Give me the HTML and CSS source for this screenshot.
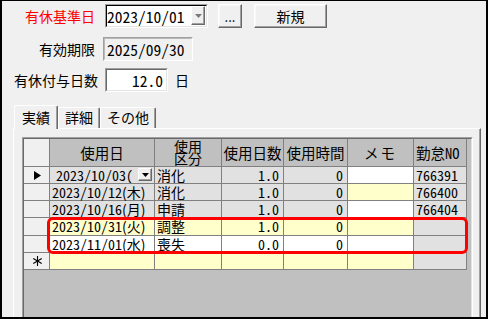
FILE: index.html
```html
<!DOCTYPE html>
<html lang="ja">
<head>
<meta charset="utf-8">
<title>有休</title>
<link rel="stylesheet" href="styles.css">
</head>
<body>
<div class="window">
  <div class="form">
    <div class="row r1">
      <span class="lbl red">有休基準日</span>
      <div class="combo sunken">
        <div class="sunken-in combo-in">
          <span class="val num">2023/10/01</span>
          <span class="ddbtn"><svg width="7" height="4" viewBox="0 0 7 4"><polygon points="0,0 7,0 3.5,4" fill="#7a7a7a"/></svg></span>
        </div>
      </div>
      <button class="btn dots">...</button>
      <button class="btn newbtn">新規</button>
    </div>
    <div class="row r2">
      <span class="lbl">有効期限</span>
      <div class="tb2 sunken">
        <div class="sunken-in tb2-in"><span class="val num">2025/09/30</span></div>
      </div>
    </div>
    <div class="row r3">
      <span class="lbl">有休付与日数</span>
      <div class="tb3 sunken">
        <div class="sunken-in tb3-in"><span class="val num">12.0</span></div>
      </div>
      <span class="unit">日</span>
    </div>
  </div>

  <div class="tabstrip">
    <div class="tab sel">実績</div>
    <div class="tab t2">詳細</div>
    <div class="tab t3">その他</div>
  </div>

  <div class="panel">
    <div class="grid">
      <div class="grid-in">
        <div class="gr hd">
          <div class="c w0 rh"></div>
          <div class="c w1 h">使用日</div>
          <div class="c w2 h two">使用<br>区分</div>
          <div class="c w3 h">使用日数</div>
          <div class="c w4 h">使用時間</div>
          <div class="c w5 h memo">メモ</div>
          <div class="c w6 h hl">勤怠<span class="num">NO</span></div>
        </div>

        <div class="gr">
          <div class="c w0 rh mark"><svg width="7" height="9" viewBox="0 0 7 9"><polygon points="0,0 7,4.5 0,9" fill="#000"/></svg></div>
          <div class="c w1 g edit"><span class="num">2023/10/03(</span><span class="cellbtn"><svg width="7" height="4" viewBox="0 0 7 4"><polygon points="0,0 7,0 3.5,4" fill="#000"/></svg></span></div>
          <div class="c w2 g l">消化</div>
          <div class="c w3 g r num">1.0</div>
          <div class="c w4 g r num">0</div>
          <div class="c w5 w"></div>
          <div class="c w6 g l num">766391</div>
        </div>

        <div class="gr">
          <div class="c w0 rh"></div>
          <div class="c w1 g l"><span class="num">2023/10/12</span>(木)</div>
          <div class="c w2 g l">消化</div>
          <div class="c w3 g r num">1.0</div>
          <div class="c w4 g r num">0</div>
          <div class="c w5 y"></div>
          <div class="c w6 g l num">766400</div>
        </div>

        <div class="gr">
          <div class="c w0 rh"></div>
          <div class="c w1 g l"><span class="num">2023/10/16</span>(月)</div>
          <div class="c w2 g l">申請</div>
          <div class="c w3 g r num">1.0</div>
          <div class="c w4 g r num">0</div>
          <div class="c w5 w"></div>
          <div class="c w6 g l num">766404</div>
        </div>

        <div class="gr tall">
          <div class="c w0 rh"></div>
          <div class="c w1 y l"><span class="num">2023/10/31</span>(火)</div>
          <div class="c w2 y l">調整</div>
          <div class="c w3 y r num">1.0</div>
          <div class="c w4 y r num">0</div>
          <div class="c w5 y"></div>
          <div class="c w6 g"></div>
        </div>

        <div class="gr">
          <div class="c w0 rh"></div>
          <div class="c w1 w l"><span class="num">2023/11/01</span>(水)</div>
          <div class="c w2 w l">喪失</div>
          <div class="c w3 w r num">0.0</div>
          <div class="c w4 w r num">0</div>
          <div class="c w5 w"></div>
          <div class="c w6 g"></div>
        </div>

        <div class="gr">
          <div class="c w0 rh mark"><svg width="9" height="10" viewBox="0 0 9 10"><g stroke="#000" stroke-width="1.1"><line x1="4.5" y1="0" x2="4.5" y2="10"/><line x1="0.3" y1="2.5" x2="8.7" y2="7.5"/><line x1="0.3" y1="7.5" x2="8.7" y2="2.5"/></g></svg></div>
          <div class="c w1 y"></div>
          <div class="c w2 y"></div>
          <div class="c w3 y"></div>
          <div class="c w4 y"></div>
          <div class="c w5 y"></div>
          <div class="c w6 g"></div>
        </div>

        <div class="highlight"></div>
      </div>
    </div>
  </div>
</div>
</body>
</html>
```

FILE: styles.css
```css
* { box-sizing: border-box; }
html, body { margin: 0; padding: 0; }
body {
  background: #f0f0f0;
  font-family: "Noto Sans CJK JP", "Noto Sans", sans-serif;
  color: #000;
}
.window {
  width: 488px;
  height: 319px;
  border-style: solid;
  border-color: #000;
  border-width: 1px 2px 2px 2px;
  background: #f0f0f0;
  overflow: hidden;
  display: flex;
  flex-direction: column;
}
.num { font-feature-settings: "hwid" 1; }

/* top form */
.form { padding-top: 3px; flex: none; }
.row { display: flex; align-items: center; height: 24px; }
.r2 { margin-top: 9px; }
.r3 { margin-top: 7px; }
.lbl {
  flex: none;
  font-size: 14px;
  line-height: 24px;
  text-align: right;
  white-space: nowrap;
}
.r1 .lbl, .r2 .lbl { width: 93px; }
.r3 .lbl { width: 96px; }
.red { color: #ff0000; }

.sunken {
  flex: none;
  height: 24px;
  border: 1px solid;
  border-color: #a0a0a0 #ffffff #ffffff #a0a0a0;
}
.sunken-in {
  height: 100%;
  border: 1px solid;
  border-color: #696969 #e3e3e3 #e3e3e3 #696969;
  display: flex;
  align-items: center;
}
.val { font-size: 15.5px; line-height: 20px; white-space: nowrap; }

.combo { margin-left: 10px; width: 103px; }
.combo-in { background: #fff; border-color: #000 #e3e3e3 #e3e3e3 #000; }
.ddbtn {
  margin-left: auto;
  margin-right: 1px;
  align-self: flex-start;
  width: 14px;
  height: 19px;
  background: #f0f0f0;
  border: 1px solid;
  border-color: #fff #696969 #696969 #fff;
  box-shadow: inset -1px -1px #a0a0a0;
  display: flex;
  align-items: center;
  justify-content: center;
}
.ddbtn svg { display: block; }

.tb2 { margin-left: 8px; width: 90px; }
.tb2-in { background: #f0f0f0; border-color: #b9b9b9 #f0f0f0 #f0f0f0 #b9b9b9; padding-left: 2px; }
.tb3 { margin-left: 7px; width: 63px; }
.tb3-in { background: #fff; justify-content: flex-end; padding-right: 3px; }
.unit { margin-left: 7px; font-size: 14px; line-height: 24px; }

.btn {
  flex: none;
  font-family: inherit;
  color: #000;
  margin: 0;
  padding: 0;
  height: 24px;
  background: #f0f0f0;
  border: 1px solid;
  border-color: #ffffff #696969 #696969 #ffffff;
  box-shadow: inset -1px -1px #a0a0a0, inset 1px 1px #f8f8f8;
}
.dots { margin-left: 10px; width: 24px; font-size: 13px; line-height: 13px; }
.newbtn { margin-left: 12px; width: 73px; font-size: 14px; line-height: 20px; }

/* tabs */
.tabstrip {
  flex: none;
  display: flex;
  align-items: flex-end;
  height: 23px;
  margin-top: 13px;
  padding-left: 12px;
}
.tab {
  flex: none;
  height: 21px;
  font-size: 14px;
  line-height: 19px;
  text-align: center;
  border-top: 1px solid #fff;
  border-left: 1px solid #fff;
  border-right: 1px solid #696969;
  box-shadow: inset -1px 0 #a0a0a0;
  border-radius: 2px 2px 0 0;
}
.tab.sel {
  width: 44px;
  height: 24px;
  line-height: 22px;
  margin-bottom: -1px;
  position: relative;
  z-index: 1;
  background: #f0f0f0;
}
.t2 { width: 42px; }
.t3 { width: 56px; }

.panel {
  flex: 1;
  margin-left: 11px;
  width: 468px;
  border-top: 1px solid #fff;
  border-left: 1px solid #fff;
  border-right: 1px solid #696969;
  box-shadow: inset -1px 0 #a0a0a0;
  padding: 8px 0 0 8px;
}

/* grid */
.grid {
  width: 451px;
  height: 200px;
  border: 1px solid;
  border-color: #a0a0a0 #ffffff #ffffff #a0a0a0;
}
.grid-in {
  position: relative;
  height: 100%;
  border: 1px solid;
  border-color: #696969 #e3e3e3 #e3e3e3 #696969;
  background: #c0c0c0;
}
.gr { display: flex; height: 17px; }
.gr.hd { height: 28px; }
.gr.tall { height: 18px; }
.c {
  flex: none;
  height: 100%;
  border-right: 1px solid #808080;
  border-bottom: 1px solid #808080;
  white-space: nowrap;
  font-size: 14px;
  line-height: 16px;
}
.tall .c { line-height: 17px; }
.w0 { width: 26px; }
.w1 { width: 105px; }
.w2 { width: 67px; }
.w3 { width: 62px; }
.w4 { width: 64px; }
.w5 { width: 66px; }
.w6 { width: 53px; }

.rh { background: #f0f0f0; }
.h {
  background: #c0c0c0;
  display: flex;
  align-items: center;
  justify-content: center;
  font-size: 14.5px;
  line-height: 16px;
}
.h.two { font-size: 14px; line-height: 12px; text-align: center; padding-bottom: 1px; }
.h.memo { letter-spacing: 2px; }
.h.hl { justify-content: flex-start; padding-left: 2px; }
.g { background: #e1e1e1; }
.y { background: #ffffcc; }
.w { background: #ffffff; }
.l { padding-left: 2px; }
.r { text-align: right; padding-right: 4px; }

.mark {
  display: flex;
  align-items: center;
  justify-content: center;
  padding-left: 2px;
}
.mark svg { display: block; }

.edit { display: flex; align-items: flex-start; padding-left: 6px; overflow: hidden; }
.edit .num { flex: 1; overflow: hidden; }
.cellbtn {
  flex: none;
  width: 14px;
  height: 13px;
  margin-top: 1px;
  margin-right: 2px;
  background: #f0f0f0;
  border: 1px solid;
  border-color: #fff #696969 #696969 #fff;
  box-shadow: inset -1px -1px #a0a0a0;
  display: flex;
  align-items: center;
  justify-content: center;
}
.cellbtn svg { display: block; }

.highlight {
  position: absolute;
  left: 23px;
  top: 78px;
  width: 421px;
  height: 37px;
  border: 3px solid #ff0000;
  border-radius: 6px;
}
```
